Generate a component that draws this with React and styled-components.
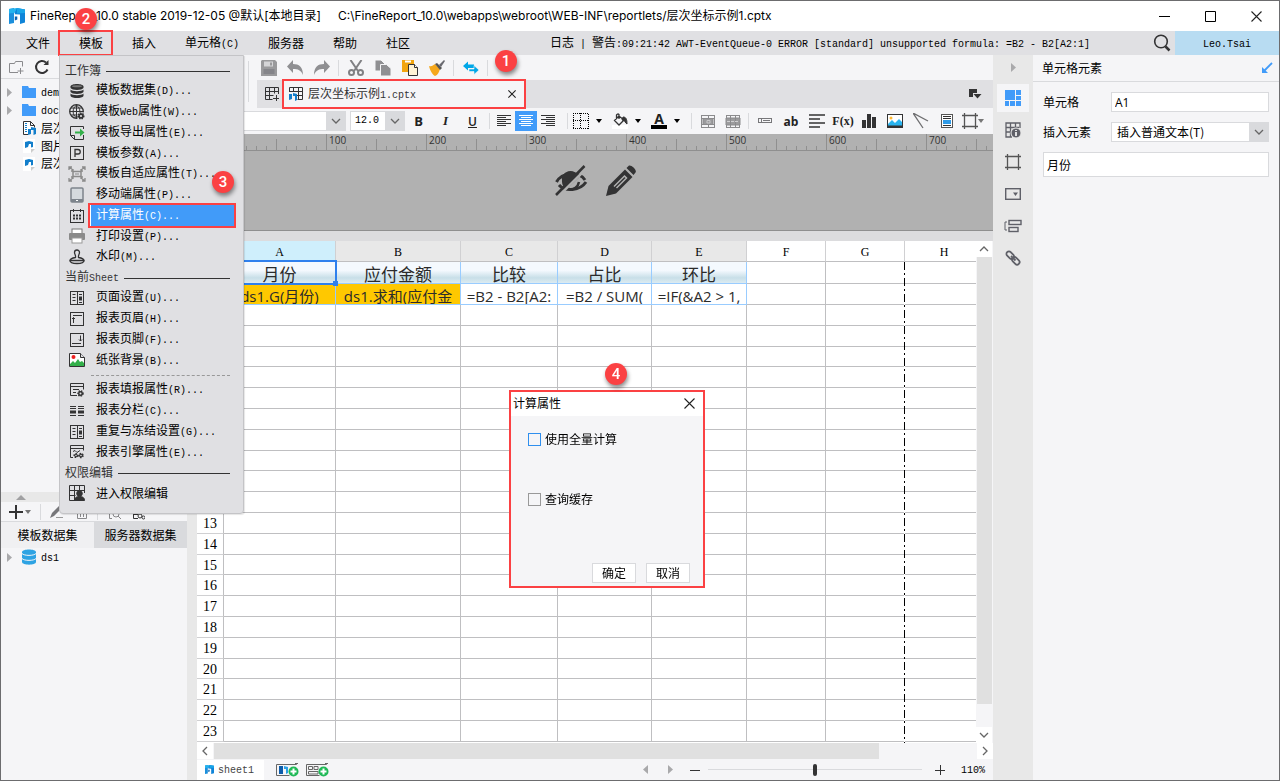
import React from 'react';
import styled, { createGlobalStyle, css } from 'styled-components';

const colors = {
  panel: '#f5f5f7',
  bar: '#e0e0e3',
  strip: '#e8e8e8',
  line: '#d9dadd',
  blue: '#419bf9',
  red: '#fb4143',
  ink: '#333334',
};

const song = '"Noto Sans CJK SC", "Liberation Sans", sans-serif';
const mono = '"Liberation Mono", "Noto Sans CJK SC", monospace';
const serif = '"Liberation Serif", "Noto Sans CJK SC", serif';

const GlobalStyle = createGlobalStyle`
  * { box-sizing: border-box; }
  body {
    margin: 0;
    font-family: ${song};
    font-size: 12px;
    line-height: 18px;
    color: #000;
  }
  button, input, select {
    margin: 0;
    padding: 0;
    border: 0;
    background: none;
    font: inherit;
    color: inherit;
  }
  button svg, span svg { display: block; flex: none; }
`;

/* ---------- text ---------- */

const Latin = styled.span`
  font-family: ${mono};
  font-size: 10px;
  white-space: pre;
`;

const Label = ({ children }) => children
  .split(/([\x20-\x7e]+)/)
  .filter(Boolean)
  .map((part, i) => (/^[\x20-\x7e]/.test(part) ? <Latin key={i}>{part}</Latin> : part));

/* ---------- icons ---------- */

const Svg = ({ w = 16, h = 16, children, ...rest }) => (
  <svg width={w} height={h} viewBox={`0 0 ${w} ${h}`} fill="none" stroke={colors.ink} aria-hidden="true" {...rest}>
    {children}
  </svg>
);

const Logo = ({ size = 16 }) => (
  <svg width={size} height={size} viewBox="0 0 16 16" aria-hidden="true">
    <path d="M0 1l5-1v15l-5 1z" fill="#1b8fdc" />
    <path d="M0 1l8-1v4.500l-8 1z" fill="#23b3ee" />
    <path d="M5.800 8.500h2.500v3l-2.500 1z" fill="#0c61b0" />
    <path d="M8 0l8 1.500v13l-5 1.500v-9.500l-5.200-.3v-1.700z" fill="#0f84d8" />
    <path d="M8 0l8 1.500v3.500l-8 .5z" fill="#19a5e8" />
  </svg>
);

const Gear = ({ x, y, r = 3 }) => (
  <g transform={`translate(${x} ${y})`}>
    <circle r={r} fill={colors.ink} stroke={colors.ink} strokeWidth="1.500" strokeDasharray="1.300 1.100" />
    <circle r={r / 2.5} fill={colors.bar} stroke="none" />
  </g>
);

const Frame = <rect x="1.500" y="1.500" width="13" height="13" />;

const icons = {
  dataset: (
    <Svg stroke="none" fill={colors.ink}>
      <path d="M1.500 3.500C1.500 0 14.500 0 14.500 3.500V5C13 7.500 3 7.500 1.500 5z" />
      <path d="M1.500 6.500C3 8.800 13 8.800 14.500 6.500V9C13 11.500 3 11.500 1.500 9z" />
      <path d="M1.500 10.500C3 12.800 13 12.800 14.500 10.500V13C13 15.800 3 15.800 1.500 13z" />
      <ellipse cx="8" cy="3.300" rx="5" ry="1" fill="#777" />
    </Svg>
  ),
  web: (
    <Svg>
      <circle cx="7.500" cy="7.500" r="6.800" strokeWidth="1.300" />
      <path d="M7.500 .8v13.400M.8 7.500h13.500M2 4h11M2 11h8M7.500 1C3 4.500 3 10.500 7.500 14M7.500 1c4.500 3.500 4.500 9.500 0 13" />
      <rect x="8.500" y="8.500" width="8" height="8" fill={colors.bar} stroke="none" />
      <Gear x={12} y={12} r={2.800} />
    </Svg>
  ),
  exportDoc: (
    <Svg>
      <path d="M14.500 4V1.500h-13v9l4 4h9V10M1.500 10.500h4v4" />
      <path d="M6 6.500h5V3.500l4.500 4-4.500 4V8.500H6z" fill="#33b04a" stroke="none" />
    </Svg>
  ),
  param: <Svg>{Frame}<path d="M6 12V4.500h3a2 2 0 0 1 0 4.500H6" strokeWidth="1.300" /></Svg>,
  fit: (
    <Svg w={18} h={16} stroke="#8b8b8b">
      <rect x="5" y="5.500" width="8" height="5" strokeWidth="1.500" /><path d="M7 8h4" />
      <path d="M1 1l4 3M17 1l-4 3M1 15l4-3M17 15l-4-3M1 4V1h3M14 1h3v3M1 12v3h3M14 15h3v-3M3 5h2V3M13 3v2h2M3 11h2v2M13 13v-2h2" strokeWidth="1.300" />
    </Svg>
  ),
  mobile: (
    <Svg>
      <rect x="2" y="1" width="12" height="14" rx="1" stroke="#7d848c" strokeWidth="1.500" fill="#d5dade" />
      <path d="M2 13.500h12" stroke="#7d848c" strokeWidth="3" /><path d="M7 13.500h2" stroke="#fff" />
    </Svg>
  ),
  calc: (
    <Svg>
      <rect x="1.500" y="2.500" width="13" height="12" /><path d="M4.500 1v3M11.500 1v3" />
      <path d="M4 7.500h2M7 7.500h2M10 7.500h2M4 10.500h2M7 10.500h2M10 10.500h2" strokeWidth="2" />
    </Svg>
  ),
  print: (
    <Svg stroke="none">
      <rect x="3" y="1" width="10" height="5" fill="#fff" stroke="#777" />
      <rect x="0" y="5" width="16" height="7" rx="1" fill="#8a8a8a" />
      <rect x="3" y="10" width="10" height="5" fill="#fff" stroke="#999" />
    </Svg>
  ),
  stamp: (
    <Svg strokeWidth="1.300">
      <path d="M6.500 8.500C7 6 5.500 5.500 5.500 3.500a2.500 2.500 0 0 1 5 0c0 2-1.500 2.500-1 5 3 .5 5.500 1 5.500 3H1c0-2 2.500-2.500 5.500-3z" />
      <path d="M1 11.500c0 4 14 4 14 0" />
    </Svg>
  ),
  pageSetup: <Svg>{Frame}<path d="M8.500 2v12M3.500 4.500h3M3.500 7.500h3M3.500 10.500h3M10 4.500h3M10 12.500h3" /><path d="M10 8.500h3" strokeWidth="4" /></Svg>,
  header: <Svg>{Frame}<path d="M4 4.500h9M4.500 12V6.500M3 8l1.500-1.500L6 8" /></Svg>,
  footer: <Svg>{Frame}<path d="M3 11.500h9M11.500 3.500V9M10 7.500L11.500 9 13 7.500" /></Svg>,
  paper: (
    <Svg>
      <path d="M.5 1.500h11l4 4v9H.5z" fill="#fff" /><path d="M11.500 1.500v4h4" fill={colors.bar} />
      <path d="M1 14v-2l3-3 2 2 3-4 2 3 2-1 2 2v3z" fill="#33b04a" stroke="none" />
      <circle cx="4.500" cy="5" r="2" fill="#ee2222" stroke="none" />
    </Svg>
  ),
  report: <Svg><path d="M8 13.500H1.500v-12h13v6M1.500 4.500h13M4 7.500h6M4 10.500h3" /><Gear x={11.500} y={11.500} r={2.500} /></Svg>,
  columns: (
    <Svg><path d="M1 3.500h6M1 5.500h6M1 12.500h6M9 3.500h6M9 5.500h6M9 12.500h6" /><path d="M1 9h6M9 9h6" strokeWidth="3" /></Svg>
  ),
  engine: (
    <Svg>
      <path d="M4 13.500H1.500v-12h13v5M1.500 4.500h13M4 7.500l2-1 2 2 3-2" />
      <Gear x={7} y={11.500} r={1.800} /><Gear x={12} y={11.500} r={2} />
    </Svg>
  ),
  auth: (
    <Svg>
      <path d="M15.500 8V.5H.5v15h8M.5 5.500h15M.5 10.500h6M5.500.5v15M10.500.5v6" />
      <circle cx="10.500" cy="8.500" r="2.800" fill={colors.ink} /><path d="M5.500 15.500c0-3 2-4 5-4s5 1 5 4z" fill={colors.ink} />
    </Svg>
  ),
  save: (
    <Svg stroke="none">
      <path d="M1 0h13l2 2v14H0V1z" fill="#9a9a9c" /><path d="M3 1.500h9v5H3z" fill="#d5d5d7" />
      <path d="M9 2.500h2v3H9z" fill="#9a9a9c" /><path d="M2.500 9h11v5h-11z" fill="#85858a" />
    </Svg>
  ),
  undo: <Svg stroke="none"><path d="M6 0v4c6 0 10 3 10 11-2-5-5-6-10-6v4L0 6.500z" fill="#8f8f92" /></Svg>,
  redo: <Svg stroke="none"><path d="M10 0v4C4 4 0 7 0 15c2-5 5-6 10-6v4l6-6.500z" fill="#8f8f92" /></Svg>,
  cut: (
    <Svg stroke="#808083" strokeWidth="2">
      <path d="M2.500 0l7.500 11M13.500 0L6 11" /><circle cx="3.500" cy="12.500" r="2.500" /><circle cx="12.500" cy="12.500" r="2.500" />
    </Svg>
  ),
  copy: (
    <Svg stroke={colors.panel}>
      <path d="M0 0h6l4 4v7H0z" fill="#8f8f92" /><path d="M5.500 4.500h6l4.500 4V16H5.500z" fill="#8f8f92" />
    </Svg>
  ),
  paste: (
    <Svg>
      <path d="M0 0h12v12H0z" fill="#f2a50f" stroke="none" /><path d="M3 1.500h6" stroke="#fff" strokeWidth="2" />
      <path d="M6.500 4.500h6l3 3v8h-9z" fill="#fff3d6" /><path d="M12.500 4.500v3h3" fill="#fff" />
    </Svg>
  ),
  brush: (
    <Svg stroke="none">
      <path d="M0 6c3 1 4-1 6-2l5 5c-1 3-2 6-5 7-2-1-5-5-6-10z" fill="#f5a81c" />
      <path d="M6 4l2-1 5 5-2 2z" fill="#555" /><path d="M10 5l5-5 1 1-4 6z" fill="#6a6a70" />
    </Svg>
  ),
  sync: <Svg stroke="none" fill="#00a7e8"><path d="M0 6l5-4.500V4.500h6V8H5v2.500z" /><path d="M16 10l-5 4.500V11.500H6V9h5V5.500z" stroke={colors.panel} strokeWidth=".6" /></Svg>,
  newSheet: <Svg><path d="M14.500 8V1.500h-13v12h7M1.500 5.500h13M1.500 9.500h8M5.500 1.500v12M10.500 1.500v6" /><path d="M9 12.500h6M12.500 9v6" /></Svg>,
  sheetFile: (
    <Svg>
      <path d="M1.500 6V1.500h13v12h-5M1.500 5.500h13M8 9.500h6.500M5.500 1.500v4M10.500 1.500v12" />
      <path d="M1 8h3v5l-3 1zM5 7l4 1v6l-2 1v-5H5z" fill="#127ecb" stroke="none" />
    </Svg>
  ),
  tabList: <Svg stroke="none" fill={colors.ink}><path d="M2 3h8v4H6v4H2zM6.500 8h8l-4 4.500z" /></Svg>,
  left: <Svg><path d="M1 2.500h14M1 4.500h9M1 6.500h14M1 8.500h9M1 10.500h14M1 12.500h9" /></Svg>,
  center: <Svg stroke="#fff"><path d="M1 2.500h14M3 4.500h10M1 6.500h14M3 8.500h10M1 10.500h14M3 12.500h10" /></Svg>,
  right: <Svg><path d="M1 2.500h14M6 4.500h9M1 6.500h14M6 8.500h9M1 10.500h14M6 12.500h9" /></Svg>,
  border: (
    <Svg stroke="#000" strokeDasharray="1 1" shapeRendering="crispEdges">
      <path d="M0 .5h16M0 15.500h16M0 7.500h16M.5 0v16M15.500 1v16M7.500 0v16" />
    </Svg>
  ),
  fill: (
    <Svg>
      <path d="M0 12h16v4H0z" fill="#fff" stroke="none" />
      <path d="M7 3L2.500 7.500 7 12l5-5zM7 6V1.500A1.500 1.500 0 0 0 4.500 2v4" strokeWidth="1.300" />
      <path d="M11 4c3 0 4 2 4 7-2-1-2-4-5-4z" fill={colors.ink} />
    </Svg>
  ),
  merge: (
    <Svg stroke="#8b8b8d">
      <rect x="1.500" y="2.500" width="13" height="12" /><path d="M3 5.500h10v6H3z" fill="#9b9b9d" /><path d="M8.500 2v3M8.500 12v2M1 5.500h14M1 11.500h14" />
      <path d="M7 7.500h3v2.500H7z" stroke="#c8c8ca" />
    </Svg>
  ),
  unmerge: (
    <Svg stroke="#8b8b8d">
      <rect x="1.500" y="2.500" width="13" height="12" /><path d="M1 5h14v7H1z" fill="#9b9b9d" /><path d="M5.500 2v12M10.500 2v12" />
      <path d="M2 8.500h12" stroke="#d0d0d2" strokeDasharray="3 1" />
    </Svg>
  ),
  widget: <Svg stroke="#77777a"><rect x="1.500" y="5.500" width="13" height="4" /><path d="M4.500 6v3M6 7.500h7" /></Svg>,
  lines: <Svg strokeWidth="1.600"><path d="M0 2h16M0 6h11M0 10h16M0 14h11" /></Svg>,
  chart: <Svg stroke="none" fill={colors.ink}><path d="M1 7h4v8H1zM6 1h4v14H6zM11 4h4v11h-4z" /></Svg>,
  image: (
    <Svg>
      <rect x=".5" y="1.500" width="15" height="13" fill="#fff" /><path d="M1 14v-3l4-4 3 3 4-4 3 3v5z" fill="#29b4f0" stroke="none" />
      <path d="M1 13.500h14" strokeWidth="2" /><circle cx="4" cy="5" r="1.500" fill="#fdb933" stroke="none" />
    </Svg>
  ),
  slash: <Svg stroke="#6e6e70" strokeWidth="1.300"><path d="M0 0l15 8M0 0l10 15" /></Svg>,
  doc: (
    <Svg>
      <rect x="2.500" y="1.500" width="11" height="13" fill="#fff" stroke="#555" /><path d="M4 3.500h8M4 5.500h8M4 12.500h8" />
      <path d="M4 7h8v4H4z" fill="#2f9be8" stroke="none" />
    </Svg>
  ),
  frame: <Svg stroke="#555"><path d="M2.500 0v16M13.500 0v16M0 2.500h16M0 13.500h16" strokeWidth="1.300" /></Svg>,
  cells: <Svg stroke="none" fill={colors.blue}><path d="M0 0h10v10H0zM11 0h5v5h-5zM11 6h5v4h-5zM0 11h4v5H0zM5 11h5v5H5zM11 11h5v5h-5z" /></Svg>,
  info: (
    <Svg stroke="#5f6068">
      <path d="M15 6V1H1v14h6M1 5.500h13M1 10h6M5.500 1v14M10.500 1v4" strokeWidth="1.300" />
      <circle cx="11" cy="11" r="5" fill="#5f6068" stroke={colors.strip} /><path d="M11 8v1M11 10v4" stroke="#fff" strokeWidth="1.600" />
    </Svg>
  ),
  combo: <Svg stroke="#5f6068" strokeWidth="1.400"><rect x=".7" y="2.700" width="14.600" height="10.600" /><path d="M8 6.500h5L10.500 10z" fill="#5f6068" stroke="none" /></Svg>,
  align: <Svg w={18} stroke="#5f6068" strokeWidth="1.400"><path d="M3 4H1v8h2" strokeWidth="1" /><rect x="5" y="2.500" width="12" height="4" /><rect x="5" y="9.500" width="9" height="4" /></Svg>,
  link: (
    <Svg stroke="#5f6068" strokeWidth="1.800">
      <rect x="1" y="2.500" width="8.500" height="5" rx="2.500" transform="rotate(45 5 5)" />
      <rect x="6.500" y="8.500" width="8.500" height="5" rx="2.500" transform="rotate(45 11 11)" /><path d="M6 6l4.500 4.500" />
    </Svg>
  ),
  search: <Svg w={18} h={18} strokeWidth="1.600"><circle cx="8" cy="7.500" r="6.300" /><path d="M12.500 12.500l4 4" strokeWidth="2.500" /></Svg>,
  folder: <Svg stroke="none" fill={colors.blue}><path d="M1 2h6l1 2h7v10H1z" /></Svg>,
  addFolder: <Svg stroke="#8a8a8d"><path d="M10 13.500H1.500v-9h5M6.500 4.500l1-2h7v5M12.500 9v6M9.500 12h6" /></Svg>,
  refresh: <Svg strokeWidth="2"><path d="M13.500 10.500A6 6 0 1 1 12 3.500" /><path d="M14.500 1v5h-5z" fill={colors.ink} stroke="none" /></Svg>,
  zipDoc: (
    <Svg>
      <path d="M7 14.500H2.500v-13h7l4 4v2M9.500 1.500v4h4" fill="#fff" /><path d="M5 3v9" stroke="#127ecb" strokeWidth="2" strokeDasharray="1 1" />
      <path d="M7 9h3v5l-3 1zM10 7l5 1v6l-2.500 1V10H10z" fill="#127ecb" stroke="none" />
    </Svg>
  ),
  cptDoc: (
    <Svg stroke="none">
      <path d="M2 1h12v10l-4 4H2z" fill="#fff" /><path d="M10 15v-4h4z" fill="#ccc" />
      <path d="M4 4l4-1v3l-1 3-3 1zM8 3l4 1v5l-2 .5V6H8z" fill="#127ecb" />
    </Svg>
  ),
  db: (
    <Svg stroke="none" fill="#2ea3e3">
      <path d="M1 3C1-.5 15-.5 15 3v10c0 3.500-14 3.500-14 0z" /><path d="M1 4.500c2 2.500 12 2.500 14 0M1 9.500c2 2.500 12 2.500 14 0" stroke="#f5f5f7" fill="none" />
    </Svg>
  ),
  plus: <Svg strokeWidth="2"><path d="M1 8h14M8 1v14" /></Svg>,
  pen: <Svg stroke="none"><path d="M0 14l2-5 8-8c2 0 3 1 2 3l-8 8z" fill="#77777a" /><path d="M6 13h7v1H6z" fill="#999" /></Svg>,
  trash: <Svg stroke="#88888a"><path d="M5.500 4.500h9v10h-9zM8.500 6v7M11.500 6v7M4 4.500h12" /></Svg>,
  preview: <Svg stroke="#88888a"><path d="M5 14.500H2.500v-13h10v4" /><circle cx="9" cy="10" r="3" /><path d="M11 12l3 3" /></Svg>,
  linkData: <Svg><path d="M9 14.500H4.500v-12h11M5 10.500h4" /><circle cx="11" cy="12" r="2" /><circle cx="14.500" cy="13.500" r="1.500" /></Svg>,
  eyeOff: (
    <Svg w={36} h={32} stroke={colors.ink} strokeWidth="3">
      <path d="M3.500 17C9 7 26 6 32 15M33 17C27 26 12 27 6 20" />
      <path d="M9 17a8.500 8.500 0 0 1 17-4.500L14 24c-3-1-5-4-5-7z" fill={colors.ink} stroke="none" />
      <path d="M16 24c5 1 9-2 10-7" strokeWidth="2.500" />
      <path d="M6 30.500L34 3" stroke="#b1b1b1" strokeWidth="2.500" /><path d="M3 30L31.500 1" strokeWidth="2.500" />
    </Svg>
  ),
  pencil: (
    <Svg w={32} h={32} stroke="none" fill={colors.ink}>
      <path d="M1 31l2.500-10L20 4.500 27.500 12 11 28.500zM21.500 3l2-2c2-2 9 4 7 6.500L28.500 10z" />
      <path d="M9 21.500L19.500 11l2 2-10 10" stroke="#b1b1b1" strokeWidth="1.500" fill="none" />
    </Svg>
  ),
  addSheet: (
    <Svg w={23} h={14} stroke="#666">
      <path d="M20.500 2V1.500h-20v11h13M19 .5h3" /><path d="M3 3h4v8H3z" fill="#0c5cab" stroke="none" /><path d="M8 3l4 1v6l-2 1V6H8z" fill="#2ba0e4" stroke="none" />
      <circle cx="17.500" cy="8.500" r="5" fill="#1fb956" stroke="none" /><path d="M14.500 8.500h6M17.500 5.500v6" stroke="#fff" strokeWidth="2" />
    </Svg>
  ),
  addForm: (
    <Svg w={23} h={14} stroke="#666">
      <path d="M20.500 2V1.500h-20v11h13M19 .5h3M2.500 3.500h4v3h-4zM8 3.500h4v3H8zM2.500 8.500H12v2.500H2.500z" />
      <circle cx="17.500" cy="8.500" r="5" fill="#1fb956" stroke="none" /><path d="M14.500 8.500h6M17.500 5.500v6" stroke="#fff" strokeWidth="2" />
    </Svg>
  ),
  expand: <Svg w={12} h={12} stroke={colors.blue} strokeWidth="1.800"><path d="M11 1L3 9" /><path d="M1 5v6h6z" fill={colors.blue} stroke="none" /></Svg>,
};

const Caret = ({ color = '#000' }) => <Svg w={6} h={4} stroke="none" fill={color}><path d="M0 0h6L3 4z" /></Svg>;
const TriRight = () => <Svg w={5} h={9} stroke="none" fill="#a9a9ab"><path d="M0 0l5 4.500L0 9z" /></Svg>;
const TriLeft = () => <Svg w={5} h={9} stroke="none" fill="#a9a9ab"><path d="M5 0L0 4.500 5 9z" /></Svg>;
const Chevron = ({ turn = 0 }) => (
  <Svg w={10} h={10} stroke="#666" strokeWidth="1.300"><path d="M1 3l4 4 4-4" transform={`rotate(${turn} 5 5)`} /></Svg>
);
const Cross = ({ size = 11 }) => (
  <svg width={size} height={size} viewBox="0 0 11 11" stroke="#222" strokeWidth={12 / size} aria-hidden="true">
    <path d="M.5.5l10 10M10.500.5l-10 10" />
  </svg>
);

/* ---------- window ---------- */

const Window = styled.div`
  display: flex;
  flex-direction: column;
  height: 100vh;
  border: 1px solid #6c6c6e;
  background: ${colors.panel};
  overflow: hidden;
`;

const TitleBar = styled.header`
  display: flex;
  align-items: center;
  flex: none;
  height: 30px;
  padding-left: 8px;
  background: #fff;
  font-family: Inter, "Noto Sans CJK SC", sans-serif;
  font-size: 12px;
  white-space: pre;
`;

const TitleText = styled.span`
  margin-left: 5px;
  & + & { margin-left: 17px; }
`;

const WindowButtons = styled.div`
  display: flex;
  margin-left: auto;
`;

const WindowButton = styled.button`
  display: flex;
  align-items: center;
  justify-content: center;
  width: 46px;
  height: 28px;
`;

const MenuBar = styled.nav`
  display: flex;
  flex: none;
  height: 24px;
  padding-left: 5px;
  background: ${colors.bar};
`;

const MenuEntry = styled.div`
  position: relative;
  display: flex;
`;

const MenuButton = styled.button`
  padding: 0 9px 0 20px;
  white-space: nowrap;
  ${({ $marked }) => $marked && css`
    outline: 2px solid ${colors.red};
    outline-offset: -1px;
  `}
`;

const Status = styled.div`
  margin: auto 63px auto auto;
  white-space: pre;
`;

const SearchButton = styled.button`
  display: flex;
  align-items: center;
  margin-right: 4px;
`;

const User = styled.button`
  width: 104px;
  background: #b8dcf2;
`;

const Callout = styled.span`
  position: absolute;
  left: ${({ $x }) => $x}px;
  top: ${({ $y }) => $y}px;
  z-index: 5;
  width: 22px;
  height: 22px;
  border-radius: 50%;
  background: ${colors.red};
  box-shadow: 1px 3px 4px rgba(0, 0, 0, 0.45);
  color: #fff;
  font: 500 15px/22px Roboto, sans-serif;
  text-align: center;
`;

/* ---------- template menu ---------- */

const MenuPanel = styled.div`
  position: absolute;
  top: 24px;
  left: 0;
  z-index: 4;
  width: 185px;
  padding: 4px 0 10px;
  border: 1px solid #c4c4c7;
  border-radius: 0 0 4px 4px;
  background: ${colors.bar};
  box-shadow: 1px 1px 1px rgba(0, 0, 0, 0.1);
`;

const MenuHeading = styled.div`
  display: flex;
  align-items: center;
  gap: 5px;
  height: 20px;
  margin: 0 13px 0 5px;
  color: #333;
  white-space: nowrap;
  &::after {
    content: "";
    flex: 1;
    margin-top: 3px;
    border-top: 1px solid #333;
  }
`;

const MenuItem = styled.button`
  display: flex;
  align-items: center;
  width: 100%;
  height: 21px;
  padding: 0 9px 0 8px;
  text-align: left;
  &:nth-of-type(4n) { height: 20px; }
`;

const ItemIcon = styled.span`
  display: flex;
  justify-content: center;
  width: 18px;
`;

const ItemLabel = styled.span`
  flex: 1;
  margin-left: 4px;
  padding-left: 6px;
  white-space: nowrap;
  ${({ $active }) => $active && css`
    outline: 2px solid ${colors.red};
    border-left: 1px solid #fff;
    padding-left: 5px;
    background: ${colors.blue};
    color: #fff;
  `}
`;

const MenuDivider = styled.div`
  height: 9px;
  margin: 0 13px 0 31px;
  padding-top: 5px;
  &::after {
    content: "";
    display: block;
    border-top: 1px dashed #999;
  }
`;

const menuGroups = [
  {
    title: '工作簿',
    items: [
      ['dataset', '模板数据集(D)...'],
      ['web', '模板Web属性(W)...'],
      ['exportDoc', '模板导出属性(E)...'],
      ['param', '模板参数(A)...'],
      ['fit', '模板自适应属性(T)...'],
      ['mobile', '移动端属性(P)...'],
      ['calc', '计算属性(C)...', true],
      ['print', '打印设置(P)...'],
      ['stamp', '水印(M)...'],
    ],
  },
  {
    title: '当前Sheet',
    items: [
      ['pageSetup', '页面设置(U)...'],
      ['header', '报表页眉(H)...'],
      ['footer', '报表页脚(F)...'],
      ['paper', '纸张背景(B)...'],
    ],
  },
  {
    items: [
      ['report', '报表填报属性(R)...'],
      ['columns', '报表分栏(C)...'],
      ['pageSetup', '重复与冻结设置(G)...'],
      ['engine', '报表引擎属性(E)...'],
    ],
  },
  { title: '权限编辑', items: [['auth', '进入权限编辑']] },
];

const TemplateMenu = () => (
  <MenuPanel>
    {menuGroups.map((group, i) => (
      <div key={i}>
        {group.title ? <MenuHeading><span><Label>{group.title}</Label></span></MenuHeading> : <MenuDivider />}
        {group.items.map(([icon, text, active]) => (
          <MenuItem key={text}>
            <ItemIcon>{icons[icon]}</ItemIcon>
            <ItemLabel $active={active}><Label>{text}</Label></ItemLabel>
          </MenuItem>
        ))}
      </div>
    ))}
    <Callout $x={152} $y={115}>3</Callout>
  </MenuPanel>
);

/* ---------- left side ---------- */

const Body = styled.div`
  display: flex;
  flex: 1;
  min-height: 0;
`;

const Side = styled.aside`
  display: flex;
  flex-direction: column;
  flex: none;
  width: 186px;
`;

const SideTools = styled.div`
  display: flex;
  align-items: center;
  gap: ${({ $dense }) => ($dense ? 6 : 10)}px;
  height: ${({ $dense }) => ($dense ? 20 : 24)}px;
  padding: 0 7px;
  border-bottom: 1px solid ${colors.line};
`;

const PlainButton = styled.button`
  display: flex;
  align-items: center;
  gap: 1px;
`;

const Tree = styled.ul`
  margin: 0;
  padding: ${({ $grow }) => ($grow ? 4 : 0)}px 0 0 6px;
  list-style: none;
  ${({ $grow }) => $grow && 'flex: 1;'}
`;

const TreeRow = styled.li`
  display: flex;
  align-items: center;
  gap: 4px;
  height: 18px;
  white-space: nowrap;
`;

const TreeArrow = styled.span`
  width: 10px;
`;

const Splitter = styled.div`
  display: flex;
  align-items: center;
  height: 10px;
  padding-left: 15px;
  background: ${colors.strip};
`;

const VSplitter = styled.div`
  flex: none;
  width: 10px;
  background: ${colors.strip};
`;

const DataTabs = styled.div`
  display: flex;
  height: 26px;
`;

const DataTab = styled.button`
  flex: 1;
  background: ${({ $off }) => ($off ? '#d9dadd' : '#f0f0f2')};
`;

const DataPane = styled.div`
  height: 232px;
`;

const Sep = styled.span`
  flex: none;
  width: 1px;
  height: 16px;
  margin: 0 3px;
  background: ${colors.line};
`;

const files = [
  ['folder', 'demo', true],
  ['folder', 'doc', true],
  ['zipDoc', '层次坐标示例'],
  ['cptDoc', '图片'],
  ['cptDoc', '层次坐标示例1'],
];

const LeftSide = () => (
  <Side>
    <SideTools>
      <PlainButton aria-label="新建文件夹">{icons.addFolder}</PlainButton>
      <PlainButton aria-label="刷新">{icons.refresh}</PlainButton>
    </SideTools>
    <Tree $grow>
      {files.map(([icon, name, open]) => (
        <TreeRow key={name}>
          <TreeArrow>{open && <TriRight />}</TreeArrow>
          {icons[icon]}
          <span><Label>{name}</Label></span>
        </TreeRow>
      ))}
    </Tree>
    <Splitter><Svg w={10} h={5} stroke="none" fill="#a0a0a2"><path d="M0 5l5-5 5 5z" /></Svg></Splitter>
    <SideTools $dense>
      <PlainButton aria-label="添加">{icons.plus}<Caret color="#777" /></PlainButton>
      <Sep />
      <PlainButton aria-label="编辑">{icons.pen}</PlainButton>
      <PlainButton aria-label="删除">{icons.trash}</PlainButton>
      <Sep />
      <PlainButton aria-label="预览">{icons.preview}</PlainButton>
      <PlainButton aria-label="关联">{icons.linkData}</PlainButton>
    </SideTools>
    <DataTabs>
      <DataTab>模板数据集</DataTab>
      <DataTab $off>服务器数据集</DataTab>
    </DataTabs>
    <DataPane>
      <Tree>
        <TreeRow>
          <TreeArrow><TriRight /></TreeArrow>
          {icons.db}
          <span><Label>ds1</Label></span>
        </TreeRow>
      </Tree>
    </DataPane>
  </Side>
);

/* ---------- toolbars ---------- */

const Center = styled.main`
  display: flex;
  flex-direction: column;
  flex: 1;
  min-width: 0;
`;

const TopTools = styled.div`
  display: flex;
  height: 53px;
  flex: none;
`;

const TopGutter = styled.div`
  width: 60px;
  padding: 6px 8px;
  &::after {
    content: "";
    display: block;
    width: 1px;
    height: 41px;
    margin-left: auto;
    background: ${colors.line};
  }
`;

const TopRows = styled.div`
  flex: 1;
`;

const Tools = styled.div`
  position: relative;
  display: flex;
  align-items: center;
  height: 25px;
`;

const FormatTools = styled(Tools)`
  flex: none;
  height: 26px;
  padding-left: 4px;
`;

const Tool = styled.button`
  display: flex;
  align-items: center;
  justify-content: center;
  flex: none;
  width: ${({ $w = 27 }) => $w}px;
  height: 20px;
  ${({ $on }) => $on && `background: ${colors.blue};`}
`;

const DropTool = styled.button`
  display: flex;
  align-items: center;
  flex: none;
  gap: ${({ $tight }) => ($tight ? 0 : 7)}px;
  width: ${({ $tight }) => ($tight ? 30 : 39)}px;
  padding-left: 2px;
`;

const Glyph = styled.span`
  font: ${({ $font }) => $font};
  color: #222;
  ${({ $underline }) => $underline && 'text-decoration: underline;'}
  ${({ $bar }) => $bar && 'border-bottom: 4px solid #000; height: 16px; width: 16px; text-align: center;'}
`;

const AlignGroup = styled.div`
  display: flex;
  margin-right: 5px;
`;

const SelectBox = styled.label`
  display: flex;
  align-items: stretch;
  flex: none;
  width: ${({ $w }) => ($w ? `${$w}px` : 'auto')};
  height: 20px;
  border: 1px solid ${colors.line};
  background: #fff;
  & + & { margin-left: 4px; }
`;

const Select = styled.select`
  appearance: none;
  flex: 1;
  min-width: 0;
  padding-left: ${({ $small }) => ($small ? 4 : 5)}px;
  font-family: ${({ $small }) => ($small ? mono : 'inherit')};
  font-size: ${({ $small }) => ($small ? 10 : 12)}px;
  outline: 0;
`;

const SelectArrow = styled.span`
  display: flex;
  align-items: center;
  justify-content: center;
  width: 19px;
  background: ${colors.line};
`;

const TabStrip = styled.div`
  display: flex;
  align-items: center;
  height: 28px;
  padding: 0 10px 0 7px;
  background: ${colors.bar};
`;

const FileTab = styled.div`
  display: flex;
  align-items: center;
  gap: 4px;
  width: 242px;
  height: 28px;
  margin: 0 auto 0 3px;
  padding: 0 9px 0 5px;
  outline: 2px solid ${colors.red};
  outline-offset: -1px;
  background: ${colors.panel};
  color: ${colors.ink};
`;

const FileName = styled.span`
  flex: 1;
`;

const Toolbar = () => (
  <>
    <TopTools>
      <TopGutter />
      <TopRows>
        <Tools>
          <Tool $w={24} aria-label="保存">{icons.save}</Tool>
          <Tool aria-label="撤销">{icons.undo}</Tool>
          <Tool aria-label="重做">{icons.redo}</Tool>
          <Sep />
          <Tool aria-label="剪切">{icons.cut}</Tool>
          <Tool aria-label="复制">{icons.copy}</Tool>
          <Tool aria-label="粘贴">{icons.paste}</Tool>
          <Tool aria-label="格式刷">{icons.brush}</Tool>
          <Sep />
          <Tool aria-label="替换">{icons.sync}</Tool>
          <Sep />
          <Callout $x={238} $y={-5}>1</Callout>
        </Tools>
        <TabStrip>
          <PlainButton aria-label="新建">{icons.newSheet}</PlainButton>
          <FileTab>
            {icons.sheetFile}
            <FileName><Label>层次坐标示例1.cptx</Label></FileName>
            <PlainButton aria-label="关闭"><Cross size={8} /></PlainButton>
          </FileTab>
          <PlainButton aria-label="标签列表">{icons.tabList}</PlainButton>
        </TabStrip>
      </TopRows>
    </TopTools>
    <FormatTools>
      <SelectBox $w={145}>
        <Select aria-label="字体"><option value=""> </option></Select>
        <SelectArrow><Chevron /></SelectArrow>
      </SelectBox>
      <SelectBox $w={55}>
        <Select $small aria-label="字号"><option>12.0</option></Select>
        <SelectArrow><Chevron /></SelectArrow>
      </SelectBox>
      <Tool><Glyph $font={'bold 13px "Open Sans", sans-serif'}>B</Glyph></Tool>
      <Tool><Glyph $font={'italic bold 13px "Liberation Serif", serif'}>I</Glyph></Tool>
      <Tool><Glyph $underline $font={'600 12px "Open Sans", sans-serif'}>U</Glyph></Tool>
      <Sep />
      <AlignGroup>
        <Tool $w={22} aria-label="左对齐">{icons.left}</Tool>
        <Tool $w={22} $on aria-label="居中">{icons.center}</Tool>
        <Tool $w={22} aria-label="右对齐">{icons.right}</Tool>
      </AlignGroup>
      <Sep />
      <DropTool aria-label="边框">{icons.border}<Caret /></DropTool>
      <DropTool aria-label="填充">{icons.fill}<Caret /></DropTool>
      <DropTool aria-label="字体颜色"><Glyph $bar $font={'bold 14px/12px "Open Sans", sans-serif'}>A</Glyph><Caret /></DropTool>
      <Sep />
      <Tool $w={25} aria-label="合并">{icons.merge}</Tool>
      <Tool $w={25} aria-label="取消合并">{icons.unmerge}</Tool>
      <Sep />
      <Tool $w={26} aria-label="控件">{icons.widget}</Tool>
      <Tool $w={26}><Glyph $font={'bold 12px "Open Sans", sans-serif'}>ab</Glyph></Tool>
      <Tool $w={26} aria-label="富文本">{icons.lines}</Tool>
      <Tool $w={26}><Glyph $font={'bold 12px "Liberation Serif", serif'}>F(x)</Glyph></Tool>
      <Tool $w={26} aria-label="图表">{icons.chart}</Tool>
      <Tool $w={26} aria-label="图片">{icons.image}</Tool>
      <Tool $w={26} aria-label="斜线">{icons.slash}</Tool>
      <Tool $w={26} aria-label="子报表">{icons.doc}</Tool>
      <DropTool $tight aria-label="悬浮元素">{icons.frame}<Caret color="#777" /></DropTool>
    </FormatTools>
  </>
);

/* ---------- ruler and report block ---------- */

const Ruler = styled.div`
  display: flex;
  flex: none;
  height: 17px;
  padding-left: 29px;
  border-bottom: 1px solid #8f8f8f;
  background: #b1b1b1;
  overflow: hidden;
`;

const RulerPart = styled.div`
  display: flex;
  position: relative;
  flex: none;
  width: 100px;
  color: #333;
  font: 10px/13px "Open Sans", sans-serif;
`;

const RulerLabel = styled.span`
  position: absolute;
  left: 3px;
`;

const RulerTicks = () => (
  <Svg w={100} h={16} stroke="#8f8f8f">
    {Array.from({ length: 10 }, (_, i) => (
      <path key={i} d={`M${i * 10 + 0.5} 16v${i === 0 ? -16 : i === 5 ? -11 : -4}`} />
    ))}
  </Svg>
);

const ReportBlock = styled.div`
  display: flex;
  justify-content: center;
  gap: 16px;
  flex: none;
  height: 80px;
  padding-top: 14px;
  border-bottom: 1px solid #8f8f8f;
  background: #b1b1b1;
`;

const Gap = styled.div`
  flex: none;
  height: 10px;
  background: #dcdcde;
`;

/* ---------- spreadsheet ---------- */

const SheetArea = styled.div`
  display: flex;
  flex: 1;
  min-height: 0;
`;

const SheetView = styled.div`
  position: relative;
  flex: 1;
  min-width: 0;
  overflow: hidden;
  background: #fff;
`;

const PageBreak = styled.div`
  position: absolute;
  top: 21px;
  bottom: 0;
  left: 707px;
  width: 1px;
  background: repeating-linear-gradient(#000 0 8px, #fff 8px 11px, #000 11px 13px, #fff 13px 16px);
`;

const Sheet = styled.table`
  width: calc(100% + 8px);
  table-layout: fixed;
  border-collapse: separate;
  border-spacing: 0;
`;

const ColHead = styled.th`
  height: 21px;
  padding: 2px 0 0;
  border-right: 1px solid #d0d0d2;
  border-bottom: 1px solid #bfbfc1;
  background: ${({ $kind }) => ({ active: '#cfeffc', used: '#e8e8e8' }[$kind] || '#fff')};
  font: 12px/18px ${serif};
`;

const RowHead = styled.th`
  padding: 2px 0 0;
  border-right: 1px solid #bfbfc1;
  border-bottom: 1px solid #d0d0d2;
  font: 14px/16px ${serif};
`;

const Row = styled.tr`
  height: 21px;
  &:first-child { height: 22px; }
  &:nth-child(5n) { height: 20px; }
`;

const Cell = styled.td`
  padding: 0;
  border-right: 1px solid ${({ $used }) => ($used ? '#99ccff' : '#bfbfc1')};
  border-bottom: 1px solid ${({ $used }) => ($used ? '#99ccff' : '#bfbfc1')};
  ${({ $kind }) => $kind === 'title' && 'background: linear-gradient(#f4f9fe 0 40%, #c8dfe8 75%, #dcebf1);'}
  ${({ $kind }) => $kind === 'group' && 'background: #ffc800;'}
  ${({ $selected }) => $selected && 'position: relative; z-index: 1;'}
`;

const CellText = styled.div`
  height: 20px;
  padding-top: 2px;
  overflow: hidden;
  color: #2b2b2b;
  font-family: "Open Sans", "Noto Sans CJK SC", sans-serif;
  font-size: ${({ $title }) => ($title ? 17 : 15)}px;
  line-height: 20px;
  text-align: center;
  white-space: nowrap;
`;

const Selection = styled.span`
  position: absolute;
  inset: -2px -2px -2px -1px;
  border: 2px solid #2f80ed;
  &::after {
    content: "";
    position: absolute;
    right: -3px;
    bottom: -3px;
    width: 5px;
    height: 5px;
    background: #2f80ed;
  }
`;

const columns = [
  ['A', 112], ['B', 125], ['C', 97], ['D', 94], ['E', 95], ['F', 79], ['G', 79], ['H', null],
];

const cells = {
  1: ['月份', '应付金额', '比较', '占比', '环比'],
  2: ['ds1.G(月份)', 'ds1.求和(应付金', '=B2 - B2[A2:', '=B2 / SUM(', '=IF(&A2 > 1,'],
};

const cellKind = (row, col) => {
  if (row === 1 && col < 5) return 'title';
  if (row === 2 && col < 2) return 'group';
  return undefined;
};

const headKind = (i) => {
  if (i === 0) return 'active';
  return i < 5 ? 'used' : undefined;
};

const Spreadsheet = () => (
  <SheetView>
    <Sheet>
      <colgroup>
        <col width={27} />
        {columns.map(([name, width]) => <col key={name} width={width || undefined} />)}
      </colgroup>
      <thead>
        <tr>
          <ColHead aria-label="行号" />
          {columns.map(([name], i) => <ColHead key={name} $kind={headKind(i)}>{name}</ColHead>)}
        </tr>
      </thead>
      <tbody>
        {Array.from({ length: 23 }, (_, r) => r + 1).map((row) => (
          <Row key={row}>
            <RowHead>{row}</RowHead>
            {columns.map(([name], c) => {
              const text = cells[row] && cells[row][c];
              const selected = row === 1 && c === 0;
              return (
                <Cell key={name} $kind={cellKind(row, c)} $used={!!text} $selected={selected}>
                  {text && <CellText $title={row === 1}>{text}</CellText>}
                  {selected && <Selection />}
                </Cell>
              );
            })}
          </Row>
        ))}
      </tbody>
    </Sheet>
    <PageBreak />
  </SheetView>
);

const VScroll = styled.div`
  display: flex;
  flex-direction: column;
  flex: none;
  width: 17px;
`;

const HScroll = styled.div`
  display: flex;
  flex: none;
  height: 16px;
`;

const ScrollButton = styled.button`
  display: flex;
  align-items: center;
  justify-content: center;
  flex: none;
  width: 16px;
  height: 16px;
  background: #fff;
`;

const ScrollTrack = styled.div`
  display: flex;
  flex: 1;
  flex-direction: ${({ $vertical }) => ($vertical ? 'column' : 'row')};
  &::before {
    content: "";
    flex: 0 0 ${({ $size }) => $size}%;
    margin: ${({ $vertical }) => ($vertical ? '0 1px' : '0 1px')};
    background: #e0e0e0;
  }
`;

const SheetBar = styled.div`
  display: flex;
  align-items: center;
  flex: none;
  height: 21px;
`;

const SheetTab = styled.button`
  display: flex;
  align-items: center;
  gap: 4px;
  width: 67px;
  height: 20px;
  margin-right: 12px;
  padding-left: 8px;
  background: #fff;
  color: #444;
`;

const SheetActions = styled.div`
  display: flex;
  gap: 7px;
  flex: 1;
`;

const Pager = styled.div`
  display: flex;
  gap: 20px;
  margin-right: 17px;
`;

const Range = styled.input`
  appearance: none;
  width: 214px;
  height: 14px;
  margin: 0 13px 0 8px;
  background: linear-gradient(${colors.line}, ${colors.line}) center / 100% 1px no-repeat;
  &::-webkit-slider-thumb {
    appearance: none;
    width: 4px;
    height: 12px;
    border-radius: 2px;
    background: ${colors.ink};
  }
`;

const Percent = styled.span`
  margin: 0 8px 0 16px;
`;

const SheetFooter = () => (
  <SheetBar>
    <SheetTab><Logo size={9} /><span><Label>sheet1</Label></span></SheetTab>
    <SheetActions>
      <PlainButton aria-label="新增sheet">{icons.addSheet}</PlainButton>
      <PlainButton aria-label="新增聚合块">{icons.addForm}</PlainButton>
    </SheetActions>
    <Pager>
      <PlainButton aria-label="上一页"><TriLeft /></PlainButton>
      <PlainButton aria-label="下一页"><TriRight /></PlainButton>
    </Pager>
    <PlainButton aria-label="缩小"><Svg w={10} h={10}><path d="M0 5.500h10" /></Svg></PlainButton>
    <Range type="range" aria-label="缩放" min="10" max="210" defaultValue="110" />
    <PlainButton aria-label="放大"><Svg w={10} h={10}><path d="M0 5.500h10M5.500 0v10" /></Svg></PlainButton>
    <Percent><Label>110%</Label></Percent>
  </SheetBar>
);

/* ---------- right side ---------- */

const IconStrip = styled.div`
  display: flex;
  flex-direction: column;
  align-items: center;
  gap: 4px;
  flex: none;
  width: 40px;
  background: ${colors.strip};
`;

const StripButton = styled.button`
  display: flex;
  align-items: center;
  justify-content: center;
  width: 32px;
  height: ${({ $small }) => ($small ? 25 : 28)}px;
  ${({ $on }) => $on && `background: ${colors.panel};`}
`;

const Props = styled.aside`
  flex: none;
  width: 246px;
`;

const PropsTitle = styled.div`
  display: flex;
  align-items: center;
  justify-content: space-between;
  height: 27px;
  padding: 0 6px 0 9px;
  border-bottom: 1px solid ${colors.line};
`;

const PropsForm = styled.div`
  display: grid;
  grid-template-columns: 58px 1fr;
  gap: 10px;
  align-items: center;
  padding: 10px;
`;

const TextInput = styled.input`
  width: 100%;
  height: ${({ $wide }) => ($wide ? 25 : 20)}px;
  padding: 0 3px;
  border: 1px solid ${colors.line};
  background: #fff;
  font-family: "Open Sans", "Noto Sans CJK SC", sans-serif;
  ${({ $wide }) => $wide && 'grid-column: 1 / -1;'}
`;

const RightSide = () => (
  <>
    <IconStrip>
      <StripButton $small aria-label="收起"><TriRight /></StripButton>
      <StripButton $on aria-label="单元格元素">{icons.cells}</StripButton>
      <StripButton aria-label="单元格属性">{icons.info}</StripButton>
      <StripButton aria-label="悬浮元素">{icons.frame}</StripButton>
      <StripButton aria-label="控件设置">{icons.combo}</StripButton>
      <StripButton aria-label="条件属性">{icons.align}</StripButton>
      <StripButton aria-label="超级链接">{icons.link}</StripButton>
    </IconStrip>
    <Props>
      <PropsTitle>
        单元格元素
        <PlainButton aria-label="弹出">{icons.expand}</PlainButton>
      </PropsTitle>
      <PropsForm>
        <label htmlFor="cell">单元格</label>
        <TextInput id="cell" defaultValue="A1" />
        <label htmlFor="element">插入元素</label>
        <SelectBox>
          <Select id="element"><option>插入普通文本(T)</option></Select>
          <SelectArrow><Chevron /></SelectArrow>
        </SelectBox>
        <TextInput $wide aria-label="内容" defaultValue="月份" />
      </PropsForm>
    </Props>
  </>
);

/* ---------- dialog ---------- */

const Dialog = styled.div`
  position: fixed;
  left: 509px;
  top: 390px;
  z-index: 6;
  display: flex;
  flex-direction: column;
  width: 196px;
  height: 198px;
  border: 2px solid ${colors.red};
  background: ${colors.panel};
`;

const DialogTitle = styled.div`
  display: flex;
  align-items: center;
  justify-content: space-between;
  height: 24px;
  padding: 0 8px 2px 2px;
  background: #fff;
`;

const DialogBody = styled.div`
  display: flex;
  flex-direction: column;
  flex: 1;
  gap: 42px;
  padding: 14px 17px;
`;

const Check = styled.label`
  display: flex;
  align-items: center;
  gap: 4px;
  height: 18px;
  input {
    appearance: none;
    width: 13px;
    height: 13px;
    border: 1px solid ${({ $focus }) => ($focus ? '#2f8fee' : '#999')};
    background: ${colors.panel};
  }
`;

const DialogButtons = styled.div`
  display: flex;
  justify-content: flex-end;
  gap: 10px;
  padding: 0 13px 3px 0;
  button {
    width: 44px;
    height: 20px;
    border: 1px solid ${colors.line};
    background: #fff;
  }
`;

const CalcDialog = () => (
  <Dialog role="dialog" aria-label="计算属性">
    <Callout $x={94} $y={-29}>4</Callout>
    <DialogTitle>计算属性<PlainButton aria-label="关闭"><Cross /></PlainButton></DialogTitle>
    <DialogBody>
      <Check $focus><input type="checkbox" />使用全量计算</Check>
      <Check><input type="checkbox" />查询缓存</Check>
    </DialogBody>
    <DialogButtons>
      <button>确定</button>
      <button>取消</button>
    </DialogButtons>
  </Dialog>
);

const menus = ['文件', '模板', '插入', '单元格(C)', '服务器', '帮助', '社区'];

const App = () => (
  <>
    <GlobalStyle />
    <Window>
      <TitleBar>
        <Logo />
        <TitleText>FineReport_10.0 stable 2019-12-05 @默认[本地目录]</TitleText>
        <TitleText>C:\FineReport_10.0\webapps\webroot\WEB-INF\reportlets/层次坐标示例1.cptx</TitleText>
        <WindowButtons>
          <WindowButton aria-label="最小化"><Svg w={11} h={11} stroke="#000"><path d="M0 5.500h11" /></Svg></WindowButton>
          <WindowButton aria-label="最大化"><Svg w={11} h={11} stroke="#000"><path d="M.5.5h10v10H.5z" /></Svg></WindowButton>
          <WindowButton aria-label="关闭"><Cross /></WindowButton>
        </WindowButtons>
      </TitleBar>
      <MenuBar>
        {menus.map((name) => (
          <MenuEntry key={name}>
            <MenuButton $marked={name === '模板'}><Label>{name}</Label></MenuButton>
            {name === '模板' && <Callout $x={16} $y={-23}>2</Callout>}
            {name === '模板' && <TemplateMenu />}
          </MenuEntry>
        ))}
        <Status><Label>日志 | 警告:09:21:42 AWT-EventQueue-0 ERROR [standard] unsupported formula: =B2 - B2[A2:1]</Label></Status>
        <SearchButton aria-label="搜索">{icons.search}</SearchButton>
        <User><Label>Leo.Tsai</Label></User>
      </MenuBar>
      <Body>
        <LeftSide />
        <VSplitter />
        <Center>
          <Toolbar />
          <Ruler>
            {[0, 100, 200, 300, 400, 500, 600, 700].map((n) => (
              <RulerPart key={n}><RulerLabel>{n}</RulerLabel><RulerTicks /></RulerPart>
            ))}
          </Ruler>
          <ReportBlock>{icons.eyeOff}{icons.pencil}</ReportBlock>
          <Gap />
          <SheetArea>
            <Spreadsheet />
            <VScroll>
              <ScrollButton aria-label="上"><Chevron turn={180} /></ScrollButton>
              <ScrollTrack $vertical $size={95} />
              <ScrollButton aria-label="下"><Chevron /></ScrollButton>
            </VScroll>
          </SheetArea>
          <HScroll>
            <ScrollButton aria-label="左"><Chevron turn={90} /></ScrollButton>
            <ScrollTrack $size={87} />
            <ScrollButton aria-label="右"><Chevron turn={-90} /></ScrollButton>
          </HScroll>
          <SheetFooter />
        </Center>
        <RightSide />
      </Body>
      <CalcDialog />
    </Window>
  </>
);

export default App;
